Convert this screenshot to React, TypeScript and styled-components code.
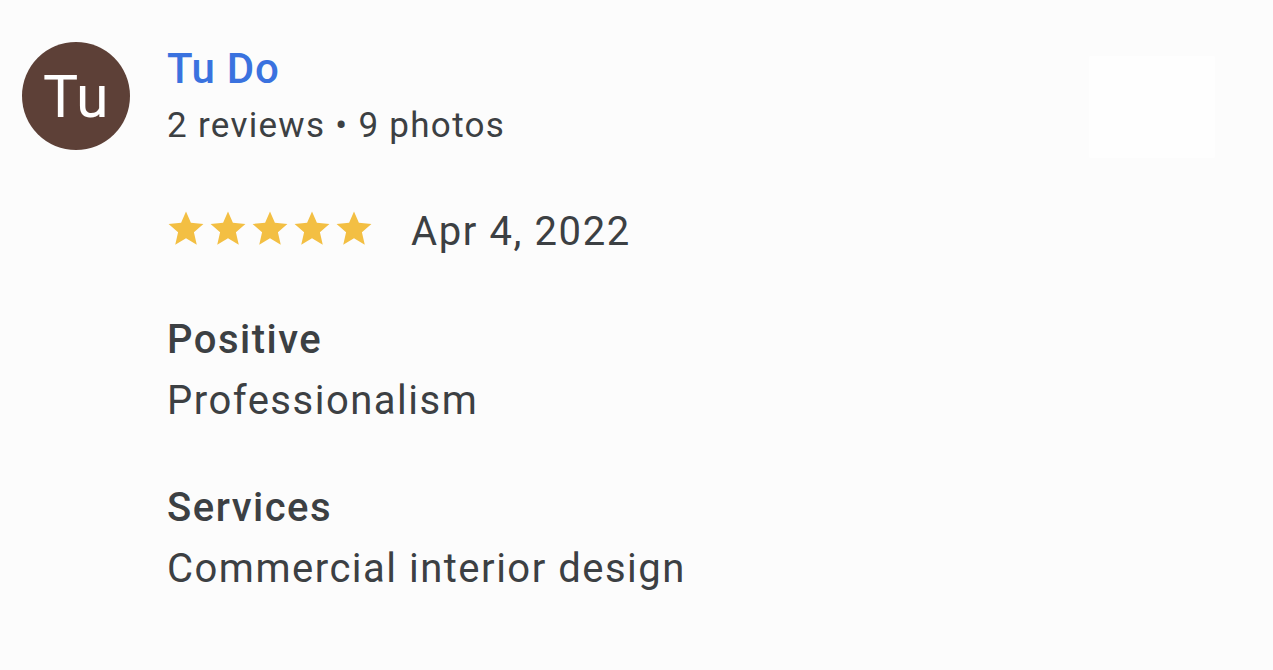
import React from "react";
import styled, { createGlobalStyle } from "styled-components";

const GlobalStyle = createGlobalStyle`
  html, body {
    margin: 0;
    padding: 0;
    background: #fcfcfc;
  }
  body {
    font-family: Roboto, "Noto Sans", "Liberation Sans", sans-serif;
    color: #3c4043;
  }
`;

const Page = styled.div`
  position: relative;
  width: 1273px;
  height: 670px;
  overflow: hidden;
`;

const Header = styled.div`
  display: flex;
  align-items: flex-start;
  padding: 42px 0 0 22px;
  gap: 37px;
`;

const Avatar = styled.div`
  width: 108px;
  height: 108px;
  border-radius: 50%;
  background: #5d4037;
  color: #ffffff;
  display: flex;
  align-items: center;
  justify-content: center;
  font-size: 59px;
  letter-spacing: 0.5px;
  flex-shrink: 0;
`;

const Who = styled.div`
  display: flex;
  flex-direction: column;
  padding-top: 1px;
`;

const Name = styled.div`
  color: #3a72df;
  font-size: 42px;
  font-weight: 500;
  line-height: 52px;
  letter-spacing: 0.7px;
`;

const Meta = styled.div`
  font-size: 35px;
  line-height: 62px;
  letter-spacing: 1.3px;
`;

const Thumb = styled.div`
  position: absolute;
  left: 1089px;
  top: 56px;
  width: 126px;
  height: 102px;
  border-radius: 2px;
  background: #fefefe;
`;

const Body = styled.div`
  padding-left: 167px;
`;

const RatingRow = styled.div`
  display: flex;
  align-items: flex-start;
  margin-top: 48px;
  gap: 38px;
`;

const Stars = styled.div`
  display: flex;
  gap: 4px;
  margin-top: 4px;
`;

const DateText = styled.div`
  font-size: 40px;
  line-height: 54px;
  letter-spacing: 1.6px;
`;

const Section = styled.div<{ $space: number }>`
  display: flex;
  flex-direction: column;
  gap: 3px;
  margin-top: ${(p) => p.$space}px;
`;

const Label = styled.div`
  font-size: 40px;
  font-weight: 500;
  line-height: 56px;
  letter-spacing: 1.5px;
`;

const Value = styled.div`
  font-size: 40px;
  line-height: 60px;
  letter-spacing: 1.5px;
`;

const Star = () => (
  <svg width="38" height="38" viewBox="0 0 24 24" style={{ display: "block" }}>
    <path
      fill="#f3bf43"
      d="M12 1.5l3.09 7.26 7.91.7-6 5.24 1.8 7.8L12 18.4l-6.8 4.1 1.8-7.8-6-5.24 7.91-.7z"
    />
  </svg>
);

const App = () => {
  return (
    <Page>
      <GlobalStyle />
      <Header>
        <Avatar>Tu</Avatar>
        <Who>
          <Name>Tu Do</Name>
          <Meta>2 reviews • 9 photos</Meta>
        </Who>
      </Header>
      <Thumb />
      <Body>
        <RatingRow>
          <Stars>
            {[0, 1, 2, 3, 4].map((i) => (
              <Star key={i} />
            ))}
          </Stars>
          <DateText>Apr 4, 2022</DateText>
        </RatingRow>
        <Section $space={53}>
          <Label>Positive</Label>
          <Value>Professionalism</Value>
        </Section>
        <Section $space={49}>
          <Label>Services</Label>
          <Value>Commercial interior design</Value>
        </Section>
      </Body>
    </Page>
  );
};

export default App;
